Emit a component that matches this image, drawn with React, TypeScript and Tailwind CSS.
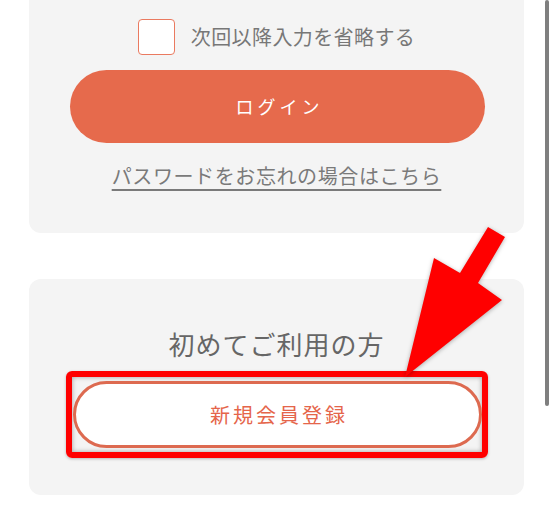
const jp = "font-['Noto_Sans_CJK_JP','Noto_Sans',sans-serif]"

const LoginCard = () => {
	return (
		<div className="mx-[29px] rounded-b-[12px] bg-[#f4f4f4] pt-[19px] pb-[43px] flex flex-col items-center">
			<label className="flex items-center gap-[16px] h-[36px]">
				<span className="block w-[37px] h-[36px] rounded-[4px] border-[1.5px] border-[#ea7a60] bg-white" />
				<span className={`${jp} text-[20px] leading-[28px] tracking-[0.4px] text-[#777777]`}>次回以降入力を省略する</span>
			</label>
			<button className="mt-[15px] self-stretch ml-[41px] mr-[39px] h-[73px] rounded-full bg-[#e66a4c] flex items-center justify-center">
				<span className={`${jp} text-[18px] tracking-[4px] text-white pl-[4px]`}>ログイン</span>
			</button>
			<a className={`${jp} mt-[19px] text-[20px] leading-[28px] tracking-[0.6px] text-[#7a7a7a] underline underline-offset-[5px] decoration-[1.5px]`}>
				パスワードをお忘れの場合はこちら
			</a>
		</div>
	)
}

const RegisterCard = () => {
	return (
		<div className="mx-[29px] mt-[46px] h-[216px] rounded-[12px] bg-[#f4f4f4] pt-[47px] flex flex-col items-center">
			<h2 className={`${jp} text-[26px] leading-[36px] tracking-[1px] text-[#666666] font-normal`}>初めてご利用の方</h2>
			<div className="mt-[9px] self-stretch ml-[37px] mr-[36px] h-[87px] rounded-[6px] border-[6px] border-[#ff0000] pt-[4px] pl-[1px] shadow-[inset_0_0_5px_rgba(0,0,0,0.35),0_1px_3px_rgba(0,0,0,0.25)]">
				<button className="w-full h-[67px] rounded-full border-[3px] border-[#dd6a50] bg-white flex items-center justify-center">
					<span className={`${jp} text-[20px] tracking-[3px] text-[#e5654a] pl-[3px]`}>新規会員登録</span>
				</button>
			</div>
		</div>
	)
}

const Arrow = () => {
	return (
		<svg
			className="absolute left-0 top-0 pointer-events-none drop-shadow-[0_1px_2px_rgba(0,0,0,0.3)]"
			width="553"
			height="508"
			viewBox="0 0 553 508"
		>
			<polygon
				points="488,227 505,237 478,283 502,300 405,377 434,258 460,273"
				fill="#ff0000"
			/>
		</svg>
	)
}

const App = () => {
	return (
		<div className="relative w-[553px] h-[508px] overflow-hidden bg-white">
			<LoginCard />
			<RegisterCard />
			<Arrow />
			<div className="absolute left-[545px] top-0 w-[4px] h-[406px] rounded-full bg-[#7f7f7f]" />
		</div>
	)
}

export default App
